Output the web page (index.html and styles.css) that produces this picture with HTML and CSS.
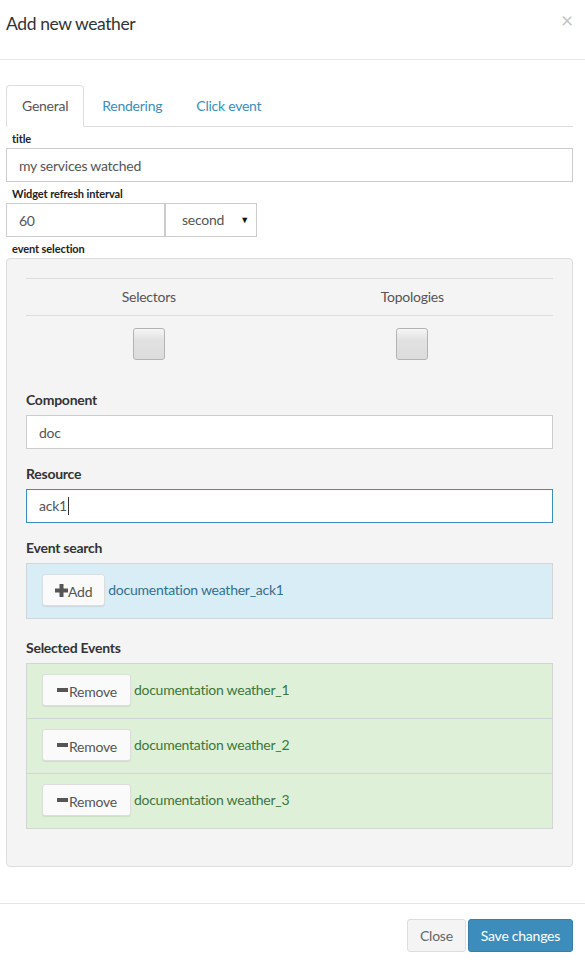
FILE: index.html
```html
<!DOCTYPE html>
<html>
<head>
<meta charset="utf-8">
<link rel="stylesheet" href="styles.css">
</head>
<body>
<div class="modal">
  <div class="modal-header">
    <h4 class="modal-title">Add new weather</h4>
    <span class="close">×</span>
  </div>
  <div class="modal-body">
    <ul class="tabs">
      <li class="tab active">General</li>
      <li class="tab">Rendering</li>
      <li class="tab">Click event</li>
    </ul>
    <div class="small-label">title</div>
    <input class="form-control" type="text" value="my services watched">
    <div class="small-label">Widget refresh interval</div>
    <div class="interval">
      <input class="form-control interval-input" type="text" value="60">
      <div class="select">second<span class="caret">▼</span></div>
    </div>
    <div class="small-label">event selection</div>
    <div class="panel">
      <div class="toggles">
        <div class="toggle-head">
          <div class="toggle-cell">Selectors</div>
          <div class="toggle-cell">Topologies</div>
        </div>
        <div class="toggle-row">
          <div class="toggle-cell"><span class="toggle-btn"></span></div>
          <div class="toggle-cell"><span class="toggle-btn"></span></div>
        </div>
      </div>
      <div class="field first">
        <div class="field-label">Component</div>
        <input class="form-control" type="text" value="doc">
      </div>
      <div class="field">
        <div class="field-label">Resource</div>
        <div class="form-control focused">ack1<span class="text-caret"></span></div>
      </div>
      <div class="field-label">Event search</div>
      <div class="list list-info">
        <div class="list-item">
          <span class="btn"><svg class="icon-plus" width="13" height="13" viewBox="0 0 13 13"><rect x="4.5" y="0" width="4" height="13" fill="#555"/><rect x="0" y="4.5" width="13" height="4" fill="#555"/></svg>Add</span>
          <span class="item-text">documentation weather_ack1</span>
        </div>
      </div>
      <div class="field-label">Selected Events</div>
      <div class="list list-success">
        <div class="list-item">
          <span class="btn btn-remove"><svg class="icon-minus" width="11" height="4" viewBox="0 0 11 4"><rect x="0" y="0" width="11" height="4" fill="#555"/></svg>Remove</span>
          <span class="item-text">documentation weather_1</span>
        </div>
        <div class="list-item">
          <span class="btn btn-remove"><svg class="icon-minus" width="11" height="4" viewBox="0 0 11 4"><rect x="0" y="0" width="11" height="4" fill="#555"/></svg>Remove</span>
          <span class="item-text">documentation weather_2</span>
        </div>
        <div class="list-item">
          <span class="btn btn-remove"><svg class="icon-minus" width="11" height="4" viewBox="0 0 11 4"><rect x="0" y="0" width="11" height="4" fill="#555"/></svg>Remove</span>
          <span class="item-text">documentation weather_3</span>
        </div>
      </div>
    </div>
  </div>
  <div class="modal-footer">
    <span class="fbtn fbtn-default">Close</span>
    <span class="fbtn fbtn-primary">Save changes</span>
  </div>
</div>
</body>
</html>
```
FILE: styles.css
```css
* { box-sizing: border-box; }
html, body { margin: 0; padding: 0; background: #fff; }
body {
  font-family: "Lato", "Liberation Sans", sans-serif;
  font-size: 14px;
  letter-spacing: -0.25px;
  color: #333;
  width: 585px;
  overflow: hidden;
}
.modal-header {
  height: 60px;
  padding: 14px 12px 0 6px;
  border-bottom: 1px solid #e5e5e5;
  display: flex;
  justify-content: space-between;
  align-items: flex-start;
}
.modal-title {
  margin: 0;
  font-size: 17.5px;
  letter-spacing: -0.4px;
  font-weight: normal;
  line-height: 20px;
  color: #333;
}
.close {
  font-size: 21px;
  line-height: 12px;
  color: #c4c4c4;
  margin-top: 0;
}
.modal-body {
  padding: 25px 12px 36px 6px;
}
.tabs {
  list-style: none;
  margin: 0;
  padding: 0;
  display: flex;
  border-bottom: 1px solid #ddd;
}
.tab {
  padding: 10px 15px;
  line-height: 20px;
  margin-right: 2px;
  margin-bottom: -1px;
  border: 1px solid transparent;
  border-radius: 4px 4px 0 0;
  color: #3c8dbc;
}
.tab.active {
  border-color: #ddd #ddd transparent;
  background: #fff;
  color: #555;
}
.small-label {
  height: 21px;
  padding: 3px 0 0 6px;
  line-height: 18px;
  font-size: 11px;
  letter-spacing: -0.1px;
  font-weight: bold;
  color: #222;
}
.form-control {
  display: block;
  width: 100%;
  height: 34px;
  padding: 6px 12px;
  border: 1px solid #ccc;
  border-radius: 0;
  font-family: inherit;
  font-size: 14px;
  letter-spacing: -0.25px;
  line-height: 20px;
  color: #555;
  background: #fff;
  margin: 0;
  outline: none;
}
.interval {
  display: flex;
}
.interval-input {
  width: 159px;
}
.select {
  width: 92px;
  height: 34px;
  border: 1px solid #ccc;
  background: #fff;
  padding: 0 0 0 16px;
  line-height: 32px;
  color: #555;
  display: flex;
  align-items: center;
  justify-content: space-between;
}
.caret {
  font-size: 9px;
  color: #111;
  margin-right: 7px;
}
.panel {
  background: #f4f4f4;
  border: 1px solid #ddd;
  border-radius: 4px;
  padding: 19px 19px 37px;
}
.toggles {
  border-top: 1px solid #ddd;
}
.toggle-head {
  border-bottom: 1px solid #ddd;
}
.toggle-head, .toggle-row {
  display: grid;
  grid-template-columns: 1fr 1fr;
}
.toggle-cell {
  text-align: center;
  margin-left: -9px;
  margin-right: 9px;
}
.toggle-head .toggle-cell {
  line-height: 36px;
  height: 36px;
  color: #555;
}
.toggle-row .toggle-cell {
  padding-top: 12px;
  height: 44px;
}
.toggle-btn {
  display: inline-block;
  width: 32px;
  height: 32px;
  border: 1px solid #b3b3b3;
  border-radius: 3px;
  background: linear-gradient(#f6f6f6, #e2e2e2 35%, #dcdcdc);
  vertical-align: top;
}
.field { margin-bottom: 15px; }
.field.first { margin-top: 30px; }
.field-label {
  font-weight: bold;
  font-size: 14px;
  line-height: 20px;
  margin-bottom: 5px;
  color: #333;
}
.form-control.focused {
  border-color: #3c8dbc;
  display: flex;
  align-items: center;
}
.text-caret {
  display: inline-block;
  width: 1px;
  height: 18px;
  background: #333;
  margin-left: 1px;
}
.list {
  border: 1px solid #d4d4d4;
}
.list-info {
  background: #d9edf7;
  margin-bottom: 19px;
}
.list-success {
  background: #dff0d8;
}
.list-item {
  display: flex;
  align-items: center;
  padding: 10px 15px 12px;
}
.list-item + .list-item {
  border-top: 1px solid #d4d4d4;
}
.btn {
  display: inline-flex;
  align-items: center;
  height: 32px;
  padding: 3px 12px 0;
  background: #fafafa;
  border: 1px solid #ddd;
  border-radius: 3px;
  box-shadow: 0 1px 1px rgba(0,0,0,0.08);
  color: #555;
  font-size: 14px;
}
.btn-remove { padding: 3px 13px 0 14px; }
.icon-plus { margin-right: 0; margin-top: -3px; }
.icon-minus { margin-right: 1px; margin-top: -3px; }
.item-text {
  margin-left: 3px;
  margin-top: -2px;
}
.list-info .item-text { color: #31708f; }
.list-success .item-text { color: #3c763d; }
.modal-footer {
  border-top: 1px solid #e5e5e5;
  padding: 15px 12px 15px;
  display: flex;
  justify-content: flex-end;
  gap: 2px;
}
.fbtn {
  display: inline-block;
  height: 33px;
  line-height: 31px;
  padding: 0 12px;
  border: 1px solid #ddd;
  border-radius: 3px;
  font-size: 14px;
}
.fbtn-default {
  background: #f4f4f4;
  color: #666;
}
.fbtn-primary {
  background: #3c8dbc;
  border-color: #367fa9;
  color: #fff;
}
```
